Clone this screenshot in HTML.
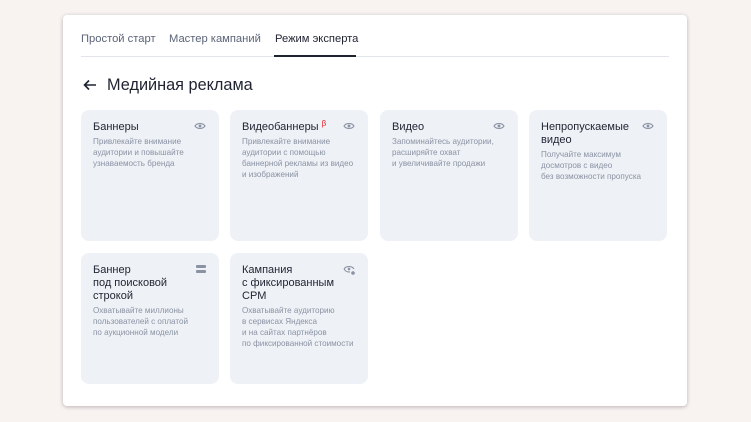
<!DOCTYPE html>
<html><head><meta charset="utf-8"><style>
*{margin:0;padding:0;box-sizing:border-box}
body{width:751px;height:422px;background:#f8f2f1;font-family:"Liberation Sans",sans-serif;position:relative;overflow:hidden;color:#1f2330}
.panel{position:absolute;left:63px;top:15px;width:624px;height:391px;background:#fff;border-radius:4px;box-shadow:0 1px 4px rgba(0,0,0,.25)}
.tabs{position:absolute;left:18px;top:18px;font-size:11.2px;color:#5a6378;white-space:nowrap}
.tabs span{position:absolute;top:0}
.line{position:absolute;left:18px;right:18px;top:41px;height:1px;background:#e2e5ec}
.ul{position:absolute;left:211px;width:82px;top:40px;height:2px;background:#1f2330}
.title{position:absolute;left:44px;top:61px;font-size:16.3px;color:#1f2330}
.arrow{position:absolute;left:20px;top:64px}
.card{position:absolute;width:138px;height:131px;background:#eef1f6;border-radius:8px;padding:11px 12px}
.card h3{font-weight:normal;font-size:11px;line-height:13px;color:#1f2330;width:98px}
.card p{font-size:8.1px;line-height:11px;color:#8a92a3;margin-top:2px;white-space:nowrap}
.ic{position:absolute;right:13px;top:12px}
</style></head><body>
<div class="panel">
<div class="tabs"><span style="left:0">Простой старт</span><span style="left:88px">Мастер кампаний</span><span style="left:194px;color:#1f2330">Режим эксперта</span></div>
<div class="line"></div><div class="ul"></div>
<svg class="arrow" width="14" height="12" viewBox="0 0 14 12"><path d="M13 6H2M6 1.5L1.5 6 6 10.5" stroke="#1f2330" stroke-width="1.6" fill="none"/></svg>
<div class="title">Медийная реклама</div>
</div>
<svg width="0" height="0"><defs><symbol id="eye" viewBox="0 0 12 8"><path d="M1 4C3 0.8 9 0.8 11 4 9 7.2 3 7.2 1 4Z" stroke="#8a92a3" stroke-width="1.1" fill="none"/><circle cx="6" cy="4" r="1.4" fill="#8a92a3"/></symbol></defs></svg>
<div class="card" style="left:81px;top:110px"><h3>Баннеры</h3><p>Привлекайте внимание<br>аудитории и повышайте<br>узнаваемость бренда</p><svg class="ic" width="12" height="8"><use href="#eye"/></svg></div>
<div class="card" style="left:230px;top:110px"><h3>Видеобаннеры <span style="color:#e0202a;font-size:8px;position:relative;top:-4px">β</span></h3><p>Привлекайте внимание<br>аудитории с помощью<br>баннерной рекламы из видео<br>и изображений</p><svg class="ic" width="12" height="8"><use href="#eye"/></svg></div>
<div class="card" style="left:380px;top:110px"><h3>Видео</h3><p>Запоминайтесь аудитории,<br>расширяйте охват<br>и увеличивайте продажи</p><svg class="ic" width="12" height="8"><use href="#eye"/></svg></div>
<div class="card" style="left:529px;top:110px"><h3>Непропускаемые видео</h3><p>Получайте максимум<br>досмотров с видео<br>без возможности пропуска</p><svg class="ic" width="12" height="8"><use href="#eye"/></svg></div>
<div class="card" style="left:81px;top:253px"><h3>Баннер<br>под поисковой<br>строкой</h3><p>Охватывайте миллионы<br>пользователей с оплатой<br>по аукционной модели</p><svg class="ic" width="10" height="8" viewBox="0 0 10 8"><rect x="0" y="0" width="10" height="3" rx="1" fill="#8a92a3"/><rect x="0" y="5" width="10" height="3" rx="1" fill="#8a92a3"/></svg></div>
<div class="card" style="left:230px;top:253px"><h3>Кампания<br>с фиксированным<br>CPM</h3><p>Охватывайте аудиторию<br>в сервисах Яндекса<br>и на сайтах партнёров<br>по фиксированной стоимости</p><svg class="ic" width="12" height="10" viewBox="0 0 12 10"><path d="M1 4C3 .8 9 .8 11 4" stroke="#8a92a3" stroke-width="1.1" fill="none"/><path d="M1 4C2.5 6.5 5 7.3 7 6.8" stroke="#8a92a3" stroke-width="1.1" fill="none"/><circle cx="6" cy="4" r="1.3" fill="#8a92a3"/><circle cx="10" cy="8" r="1.8" fill="#8a92a3"/></svg></div>
</body></html>
